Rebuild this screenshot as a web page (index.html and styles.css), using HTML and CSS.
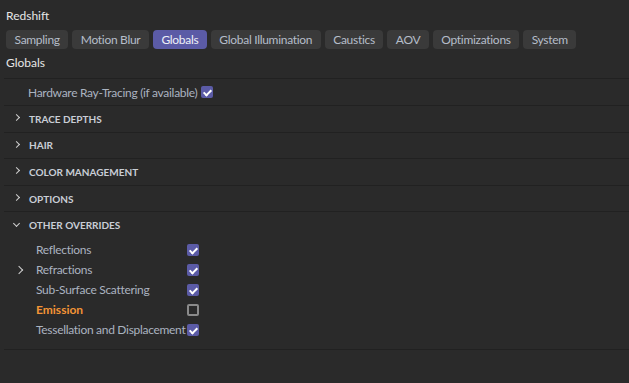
FILE: index.html
```html
<!DOCTYPE html>
<html>
<head>
    <title>Redshift - Globals</title>
    <link rel="stylesheet" href="styles.css">
</head>
<body>
    <div class="panel">
        <div class="title">Redshift</div>
        <div class="tabs">
            <span class="tab">Sampling</span>
            <span class="tab">Motion Blur</span>
            <span class="tab active">Globals</span>
            <span class="tab">Global Illumination</span>
            <span class="tab">Caustics</span>
            <span class="tab">AOV</span>
            <span class="tab">Optimizations</span>
            <span class="tab">System</span>
        </div>
        <div class="heading">Globals</div>

        <div class="group">
            <div class="row top">
                <span class="label">Hardware Ray-Tracing (if available)</span>
                <span class="check on"></span>
            </div>
        </div>

        <div class="group">
            <div class="section"><span class="chev"></span>TRACE DEPTHS</div>
        </div>
        <div class="group">
            <div class="section"><span class="chev"></span>HAIR</div>
        </div>
        <div class="group">
            <div class="section"><span class="chev"></span>COLOR MANAGEMENT</div>
        </div>
        <div class="group">
            <div class="section"><span class="chev"></span>OPTIONS</div>
        </div>
        <div class="group open">
            <div class="section"><span class="chev down"></span>OTHER OVERRIDES</div>
            <div class="items">
                <div class="item"><span class="expander"></span><span class="name">Reflections</span><span class="check on"></span></div>
                <div class="item"><span class="expander"><span class="chev"></span></span><span class="name">Refractions</span><span class="check on"></span></div>
                <div class="item"><span class="expander"></span><span class="name">Sub-Surface Scattering</span><span class="check on"></span></div>
                <div class="item"><span class="expander"></span><span class="name changed">Emission</span><span class="check"></span></div>
                <div class="item"><span class="expander"></span><span class="name">Tessellation and Displacement</span><span class="check on"></span></div>
            </div>
        </div>
    </div>
</body>
</html>
```

FILE: styles.css
```css
:root {
    --bg: #2a2a2a;
    --line: #212121;
    --tab: #3a3a3a;
    --accent: #5b5ba6;
    --text: #aab3c0;
    --bright: #e6e6e6;
    --orange: #f39436;
}

body {
    margin: 0;
    background: var(--bg);
    font-family: Lato, "Open Sans", sans-serif;
    font-size: 12px;
    color: var(--text);
}

.panel {
    padding: 7px 0 0 0;
}

.title {
    color: var(--bright);
    font-size: 12px;
    line-height: 18px;
    padding-left: 6px;
}

.tabs {
    display: flex;
    gap: 4px;
    padding: 5px 0 0 6px;
}

.tab {
    background: var(--tab);
    color: #b5bdc9;
    border-radius: 4px;
    height: 19px;
    line-height: 19px;
    padding: 0 8.5px;
    font-size: 12px;
    letter-spacing: -0.3px;
}

.tab.active {
    background: var(--accent);
    color: #eef0f8;
}

.heading {
    color: var(--bright);
    font-size: 12px;
    line-height: 18px;
    padding: 5px 0 0 6px;
    height: 29px;
    box-sizing: border-box;
}

.group {
    margin-left: 4px;
    border-top: 1px solid var(--line);
}

.group.open {
    border-bottom: 1px solid var(--line);
    padding-bottom: 9px;
}

.row.top {
    display: flex;
    align-items: center;
    gap: 4px;
    height: 26px;
    padding-left: 24px;
}

.label {
    letter-spacing: -0.3px;
}

.section {
    display: flex;
    align-items: center;
    height: 25.6px;
    padding-left: 10px;
    font-size: 10px;
    font-weight: 700;
    color: #c9ced6;
}

.chev {
    width: 4px;
    height: 4px;
    border-right: 1px solid #d0d0d0;
    border-top: 1px solid #d0d0d0;
    transform: rotate(45deg);
    margin-right: 10px;
    margin-top: -2px;
}

.chev.down {
    transform: rotate(135deg);
    margin-top: -4px;
}

.items {
    display: flex;
    flex-direction: column;
    padding-top: 2px;
}

.item {
    display: flex;
    align-items: center;
    height: 20px;
}

.expander {
    width: 32px;
    display: flex;
    justify-content: center;
    padding-left: 10px;
    box-sizing: border-box;
}

.expander .chev {
    margin: 0 12px 0 0;
    width: 5px;
    height: 5px;
}

.name {
    width: 151px;
    white-space: nowrap;
    letter-spacing: -0.3px;
}

.name.changed {
    color: var(--orange);
    font-weight: 700;
    letter-spacing: 0;
}

.check {
    width: 12px;
    height: 12px;
    box-sizing: border-box;
    border: 2px solid #8a8a8a;
    border-radius: 2px;
    position: relative;
    flex: none;
}

.check.on {
    background: var(--accent);
    border: none;
}

.check.on::after {
    content: "";
    position: absolute;
    left: 4px;
    top: 2px;
    width: 3px;
    height: 6px;
    border-right: 2px solid #fff;
    border-bottom: 2px solid #fff;
    transform: rotate(45deg);
}
```
